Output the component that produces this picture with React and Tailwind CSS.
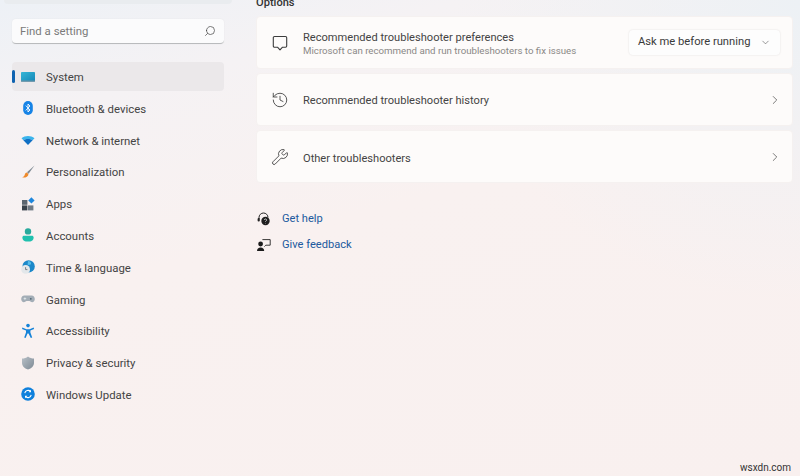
import React from "react";
import { Search, ChevronDown, ChevronRight, History, Wrench } from "lucide-react";

const NavIcons = {
  system: (
    <svg width="16" height="16" viewBox="0 0 16 16"><defs><linearGradient id="sys" x1="0" y1="0" x2="1" y2="1"><stop offset="0" stopColor="#35b6d6"/><stop offset="1" stopColor="#1487b8"/></linearGradient></defs><rect x="1" y="3" width="14" height="9.5" rx="0.8" fill="url(#sys)"/><rect x="1" y="11.5" width="14" height="1.2" fill="#6d8ea0"/></svg>
  ),
  bluetooth: (
    <svg width="16" height="16" viewBox="0 0 16 16"><rect x="3.2" y="1" width="9.6" height="14" rx="4.8" fill="#1683e6"/><path d="M5.8 5.6l4.2 4.4L8 12V4l2 2-4.2 4.4" fill="none" stroke="#fff" strokeWidth="0.9"/></svg>
  ),
  network: (
    <svg width="16" height="16" viewBox="0 0 16 16"><path d="M1.5 6.2C5.2 3.4 10.8 3.4 14.5 6.2L12.6 8.3C10 6.6 6 6.6 3.4 8.3Z" fill="#3ab4ec"/><path d="M3.4 8.3C6 6.6 10 6.6 12.6 8.3L8 13Z" fill="#0f6fc4"/></svg>
  ),
  personalization: (
    <svg width="16" height="16" viewBox="0 0 16 16"><path d="M14.5 1.5L7 8.2l1.6 1.6Z" fill="#7f8a94"/><path d="M6.6 8.6c-1.8.4-1.6 2.4-2.4 3.4-.4.6-1.2 1-2 1.4 2.4.6 5 0 6-2.2.3-.7.1-1.4-.2-1.6Z" fill="#ee8a2c"/></svg>
  ),
  apps: (
    <svg width="16" height="16" viewBox="0 0 16 16"><rect x="2" y="4" width="5.4" height="4.8" fill="#5c6670"/><rect x="2" y="9.4" width="5.4" height="5" fill="#39424b"/><rect x="8" y="9.4" width="5.4" height="5" fill="#6f7a85"/><path d="M11.4 1.2l3.2 3.2-3.2 3.2-3.2-3.2Z" fill="#1e86dc"/></svg>
  ),
  accounts: (
    <svg width="16" height="16" viewBox="0 0 16 16"><circle cx="8" cy="4.4" r="3.2" fill="#27a99c"/><path d="M2.4 10.4c0-1 .8-1.6 1.6-1.6h8c.8 0 1.6.6 1.6 1.6 0 3-2.6 4.2-5.6 4.2s-5.6-1.2-5.6-4.2Z" fill="#1fc0ae"/></svg>
  ),
  time: (
    <svg width="16" height="16" viewBox="0 0 16 16"><circle cx="8.6" cy="7.4" r="6.2" fill="#1c88c9"/><path d="M8 2c2.4.2 3.4 1.6 3 3.2-1 .4-2 1-3.4.6Z" fill="#56bdea"/><circle cx="5.6" cy="10.4" r="4.4" fill="#e3e7ea"/><path d="M5.6 8.2v2.4h1.8" stroke="#5c6670" strokeWidth="0.8" fill="none"/></svg>
  ),
  gaming: (
    <svg width="16" height="16" viewBox="0 0 16 16"><path d="M4.4 4.6h7.2c2 0 3.2 1.6 3.2 3.5s-1.2 3.2-2.6 3.2c-1.2 0-1.8-1.3-2.8-1.3H6.6c-1 0-1.6 1.3-2.8 1.3-1.4 0-2.6-1.3-2.6-3.2s1.2-3.5 3.2-3.5Z" fill="#a3adb6"/><path d="M3.6 7.6h2.6M4.9 6.4v2.4" stroke="#e7ecef" strokeWidth="0.8"/><circle cx="10.8" cy="7.8" r="0.9" fill="#4f6472"/></svg>
  ),
  accessibility: (
    <svg width="16" height="16" viewBox="0 0 16 16"><circle cx="8" cy="2.6" r="1.8" fill="#1683d8"/><path d="M2.4 4.6l4 1.6h3.2l4-1.6.5 1.3-3.7 1.7v2l1.8 5-1.4.5L8.5 10.4h-1L5.6 15.1l-1.4-.5 1.8-5v-2L2 5.9Z" fill="#1683d8"/></svg>
  ),
  privacy: (
    <svg width="16" height="16" viewBox="0 0 16 16"><defs><linearGradient id="shield" x1="0" y1="0" x2="1" y2="1"><stop offset="0" stopColor="#b9c1c8"/><stop offset="1" stopColor="#7d8994"/></linearGradient></defs><path d="M8 1.4c1.8 1.4 3.8 2 6 2.2v4.2c0 3.3-2.4 5.6-6 6.8-3.6-1.2-6-3.5-6-6.8V3.6c2.2-.2 4.2-.8 6-2.2Z" fill="url(#shield)"/></svg>
  ),
  update: (
    <svg width="16" height="16" viewBox="0 0 16 16"><circle cx="8" cy="8" r="6.8" fill="#0f80dc"/><path d="M4.8 7.2A3.3 3.3 0 0 1 10.6 5.6M11.2 8.8A3.3 3.3 0 0 1 5.4 10.4" fill="none" stroke="#fff" strokeWidth="1.1"/><path d="M11 3.8v2.4H8.6zM5 12.2V9.8h2.4z" fill="#fff"/></svg>
  ),
};

const nav = [
  ["system", "System"],
  ["bluetooth", "Bluetooth & devices"],
  ["network", "Network & internet"],
  ["personalization", "Personalization"],
  ["apps", "Apps"],
  ["accounts", "Accounts"],
  ["time", "Time & language"],
  ["gaming", "Gaming"],
  ["accessibility", "Accessibility"],
  ["privacy", "Privacy & security"],
  ["update", "Windows Update"],
];

function Card({ icon, title, sub, right, textPad }) {
  return (
    <div className="h-[53px] rounded-[4px] bg-[#fdfbfa] border border-[#f5f1f0] flex items-center pl-[14px] pr-[10px]">
      <div className="w-[18px] flex justify-center text-[#3c3c3c] shrink-0">{icon}</div>
      <div className={`ml-[14px] flex-1 min-w-0 ${textPad}`}>
        <div className="text-[11.1px] leading-[14px] text-[#444]">{title}</div>
        {sub && <div className="text-[9.7px] leading-[12px] text-[#8a8886]">{sub}</div>}
      </div>
      {right}
    </div>
  );
}

export default function App() {
  return (
    <div className="relative w-[800px] h-[476px] overflow-hidden flex font-['Roboto',sans-serif] bg-[linear-gradient(165deg,#edf1f6_0%,#f5f2f4_18%,#f9f1f0_45%,#f9f0ef_100%)]">
      <aside className="w-[256px] shrink-0 pl-[12px] pr-[32px]">
        <div className="h-[4px] rounded-b-[4px] bg-[#e9ecef] -mx-[8px]" />
        <div className="mt-[15px] h-[25px] rounded-[4px] bg-[#fbfbfc] border-b border-[#b9bbbd] shadow-[0_0_2px_rgba(0,0,0,0.06)] flex items-center justify-between pl-[8px] pr-[8px]">
          <span className="text-[11.4px] text-[#7a7a7a] pt-[2px]">Find a setting</span>
          <Search size={12} strokeWidth={1.4} className="text-[#444] -scale-x-100" />
        </div>
        <nav className="mt-[18px] flex flex-col gap-[2.8px]">
          {nav.map(([k, label], i) => (
            <div key={k} className={`relative h-[29px] rounded-[4px] flex items-center pl-[8px] ${i === 0 ? "bg-[#ebe8ea]" : ""}`}>
              {i === 0 && <div className="absolute left-0 top-[8px] w-[2.5px] h-[13px] rounded-full bg-[#0f63b0]" />}
              <span className="w-[16px] flex justify-center shrink-0">{NavIcons[k]}</span>
              <span className="ml-[10px] pt-[2px] text-[11.4px] text-[#444] whitespace-nowrap">{label}</span>
            </div>
          ))}
        </nav>
      </aside>

      <main className="flex-1 pr-[7px] bg-[radial-gradient(ellipse_at_100%_0%,#edf1f5_0%,rgba(249,241,240,0)_45%)]">
        <div className="-mt-[5px] h-[21px] text-[11.1px] font-medium leading-[16px] text-[#333]">Options</div>
        <div className="flex flex-col gap-[4px]">
          <Card
            textPad="pt-[2px]"
            icon={<svg width="18" height="18" viewBox="0 0 18 18" fill="none" stroke="currentColor" strokeWidth="1.1" strokeLinejoin="round"><path d="M3.5 2.5h11a1.2 1.2 0 0 1 1.2 1.2v8.4a1.2 1.2 0 0 1-1.2 1.2h-3.2L9 15.8 6.7 13.3H3.5a1.2 1.2 0 0 1-1.2-1.2V3.7a1.2 1.2 0 0 1 1.2-1.2Z"/></svg>}
            title="Recommended troubleshooter preferences"
            sub="Microsoft can recommend and run troubleshooters to fix issues"
            right={
              <div className="h-[25px] w-[151px] mr-[2px] rounded-[4px] bg-[#fdfdfd] shadow-[0_0_2px_rgba(0,0,0,0.12)] flex items-center justify-between pl-[9px] pr-[9px]">
                <span className="text-[11.2px] text-[#3a3a3a] whitespace-nowrap">Ask me before running</span>
                <ChevronDown size={11} strokeWidth={1.3} className="text-[#555]" />
              </div>
            }
          />
          <Card
            textPad="pt-[3px]"
            icon={<History size={18} strokeWidth={1.15} />}
            title="Recommended troubleshooter history"
            right={<ChevronRight size={14} strokeWidth={1.2} className="text-[#444]" />}
          />
          <Card
            textPad="pt-[4px]"
            icon={<Wrench size={18} strokeWidth={1.15} />}
            title="Other troubleshooters"
            right={<ChevronRight size={14} strokeWidth={1.2} className="text-[#444]" />}
          />
        </div>
        <div className="mt-[27px] flex flex-col gap-[8px]">
          <div className="h-[18px] flex items-center">
            <svg width="16" height="16" viewBox="0 0 16 16" className="shrink-0"><path d="M3 8V6.5a4.5 4.5 0 0 1 9 0" fill="none" stroke="#222" strokeWidth="1"/><rect x="1.6" y="7" width="2.2" height="3.4" rx="1" fill="#222"/><circle cx="9.5" cy="10" r="4.2" fill="#1f1f1f"/><path d="M8.4 9a1.1 1.1 0 1 1 1.6 1c-.4.2-.5.4-.5.8M9.5 12v.4" fill="none" stroke="#fff" strokeWidth="0.7"/></svg>
            <span className="ml-[10px] text-[11.1px] text-[#215a9e]">Get help</span>
          </div>
          <div className="h-[18px] flex items-center">
            <svg width="16" height="16" viewBox="0 0 16 16" className="shrink-0"><circle cx="4.6" cy="7" r="2.4" fill="#1c1c1c"/><path d="M1 14c0-2.4 1.5-3.6 3.6-3.6S8.2 11.6 8.2 14Z" fill="#1c1c1c"/><path d="M6.4 2.6h7.8v5.6H9.8L8.4 9.6" fill="none" stroke="#222" strokeWidth="0.9"/></svg>
            <span className="ml-[10px] text-[11.1px] text-[#215a9e]">Give feedback</span>
          </div>
        </div>
      </main>
      <span className="absolute right-[9px] bottom-[1px] text-[10px] text-[#333]">wsxdn.com</span>
    </div>
  );
}
